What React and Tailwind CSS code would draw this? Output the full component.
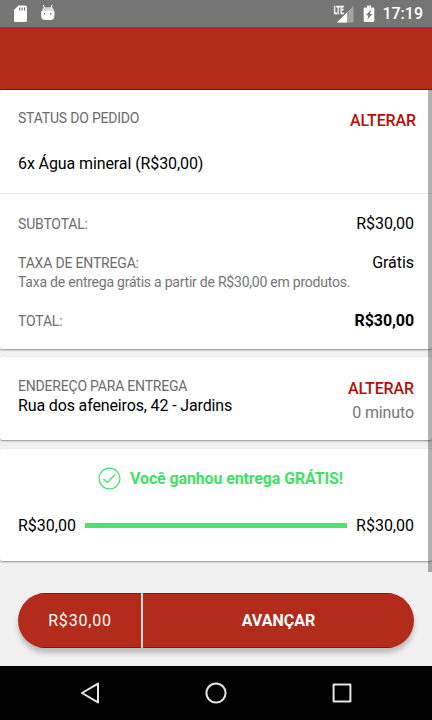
import React from 'react'

const StatusBar = () => (
  <div className="flex h-[27px] shrink-0 items-center justify-between bg-[#757575] pr-[9px] pl-[13px] text-white">
    <div className="flex items-center gap-[13px]">
      <svg width="15" height="18" viewBox="0 0 15 18" fill="none">
        <path d="M5.5 0.5H12.5Q14 0.5 14 2V15.5Q14 17 12.5 17H2.5Q1 17 1 15.5V5Z" fill="#fff" />
        <path d="M6.6 2.6V5.6M9.2 2.6V5.6M11.6 2.6V5.6" stroke="#757575" strokeWidth="1.2" />
      </svg>
      <svg width="14" height="18" viewBox="0 0 14 18" fill="none" className="-mt-[1px]">
        <path d="M2.3 0.8L3.6 4.5M11.2 0.8L9.9 4.5" stroke="#fff" strokeWidth="1" />
        <path d="M1 8Q1 3.2 4 3.2H10Q13 3.2 13 8Z" fill="#d8d8d8" />
        <path d="M0.2 7.2Q7 6 13.4 7.2V12Q13.4 16 9.5 16H4.2Q0.2 16 0.2 12Z" fill="#fff" />
        <circle cx="3.5" cy="9.8" r="0.7" fill="#444" />
        <circle cx="9.8" cy="9.8" r="0.7" fill="#444" />
      </svg>
    </div>
    <div className="flex items-center">
      <svg width="21" height="18" viewBox="0 0 21 18" fill="none">
        <path d="M20.5 1V17.5H4Z" fill="#a3a3a3" />
        <path d="M14 7.5V17.5H4Z" fill="#fff" />
        <path d="M0 0H11.5V8.5H0Z" fill="#757575" />
        <text x="0.7" y="8.6" fill="#fff" stroke="#fff" strokeWidth="0.3" fontSize="10" fontWeight="700" fontFamily="Roboto, sans-serif" textLength="10" lengthAdjust="spacingAndGlyphs">LTE</text>
      </svg>
      <svg width="12" height="18" viewBox="0 0 12 18" fill="none" className="ml-[9px]">
        <path d="M4 0.5H8V2.5H10Q11.3 2.5 11.3 3.5V16Q11.3 17 10 17H2Q0.7 17 0.7 16V3.5Q0.7 2.5 2 2.5H4Z" fill="#fff" />
        <path d="M8.2 4.8L2.8 10.2H5.4L4.4 14.6L9.4 9.1H6.9Z" fill="#757575" />
      </svg>
      <span className="mt-px ml-[7px] text-[16px] leading-5 font-medium">17:19</span>
    </div>
  </div>
)

const Line = ({ label, hint, value, bold }) => (
  <div className="flex justify-between pr-[18px] pl-[18px]">
    <div className="mt-px text-[14px] leading-[19px] text-[#6c6c6c]">
      <p className="tracking-[-0.18px]">{label}</p>
      {hint && (
        <p className="-mr-[80px] tracking-[-0.23px] whitespace-nowrap text-[#757575]">{hint}</p>
      )}
    </div>
    <p
      className={
        bold
          ? 'text-base leading-5 font-bold tracking-[-0.1px]'
          : 'text-base leading-5 tracking-[-0.04px]'
      }
    >
      {value}
    </p>
  </div>
)

const Card = ({ className, children }) => (
  <div className={`shrink-0 rounded-[2px] bg-white shadow-[0_1px_2px_rgba(0,0,0,0.4)] ${className}`}>
    {children}
  </div>
)

const Order = () => (
  <Card className="h-[259px]">
    <div className="flex h-[104px] flex-col border-b border-[#e8e8e8] pt-[18px] pr-[16px] pl-[18px]">
      <div className="flex h-[46px] justify-between">
        <p className="text-[14px] leading-5 tracking-[-0.2px] text-[#6c6c6c]">STATUS DO PEDIDO</p>
        <p className="mt-[3px] text-base leading-5 font-medium tracking-[-0.12px] text-[#b50f0a]">ALTERAR</p>
      </div>
      <p className="text-base leading-5 tracking-[-0.1px]">6x Água mineral (R$30,00)</p>
    </div>
    <div className="flex flex-col gap-[19px] pt-5">
      <Line label="SUBTOTAL:" value="R$30,00" />
      <Line
        label="TAXA DE ENTREGA:"
        hint="Taxa de entrega grátis a partir de R$30,00 em produtos."
        value="Grátis"
      />
      <Line label="TOTAL:" value="R$30,00" bold />
    </div>
  </Card>
)

const Address = () => (
  <Card className="flex h-[83px] justify-between px-[18px] pt-[19px]">
    <div>
      <p className="text-[14px] leading-5 tracking-[-0.2px] text-[#6c6c6c]">ENDEREÇO PARA ENTREGA</p>
      <p className="text-base leading-5 tracking-[-0.14px]">Rua dos afeneiros, 42 - Jardins</p>
    </div>
    <div className="pt-[3px] text-right text-base leading-5 tracking-[-0.12px]">
      <p className="font-medium text-[#b50f0a]">ALTERAR</p>
      <p className="mt-1 text-[#757575]">0 minuto</p>
    </div>
  </Card>
)

const FreeDelivery = () => (
  <Card className="h-[112px] px-[18px] pt-[18px]">
    <div className="flex items-center justify-center gap-[9px] pl-[9px] text-[#43e068]">
      <svg width="23" height="23" viewBox="0 0 23 23" fill="none" stroke="currentColor">
        <circle cx="11.5" cy="11.5" r="10.4" strokeWidth="1.1" />
        <path d="M5.5 12L9.4 15.5L17.2 7.5" strokeWidth="1.2" />
      </svg>
      <p className="text-base leading-5 font-bold tracking-[-0.13px]">Você ganhou entrega GRÁTIS!</p>
    </div>
    <div className="mt-[25px] flex items-center justify-between text-base leading-5">
      <p className="mt-px -mb-px">R$30,00</p>
      <div className="mx-[9px] h-[5px] flex-1 bg-[#4be36e]" />
      <p className="mt-px -mb-px">R$30,00</p>
    </div>
  </Card>
)

const NavBar = () => (
  <div className="flex h-[54px] shrink-0 items-center justify-center gap-[102px] bg-black">
    <svg width="24" height="24" viewBox="0 0 24 24" fill="none" stroke="#e6e6e6" strokeWidth="2" strokeLinejoin="round">
      <path d="M20 2.6V21.4L4 12Z" />
    </svg>
    <svg width="24" height="24" viewBox="0 0 24 24" fill="none" stroke="#e6e6e6" strokeWidth="2">
      <circle cx="12" cy="12" r="9.6" />
    </svg>
    <svg width="24" height="24" viewBox="0 0 24 24" fill="none" stroke="#e6e6e6" strokeWidth="2" strokeLinejoin="round">
      <path d="M3.6 3.6H20.4V20.4H3.6Z" />
    </svg>
  </div>
)

const App = () => {
  return (
    <div className="flex h-[720px] w-[432px] flex-col overflow-hidden bg-[#f1f1f1] font-[Roboto,sans-serif] text-black">
      <StatusBar />
      <div className="h-[63px] shrink-0 border-b border-[#a80000] bg-[#b32b1b]" />
      <div className="relative flex h-[482px] shrink-0 flex-col">
        <Order />
        <div className="h-2 shrink-0" />
        <Address />
        <div className="h-[9px] shrink-0" />
        <FreeDelivery />
        <div className="absolute top-0 right-0 h-full w-[4.5px] bg-black/30" />
      </div>
      <div className="flex flex-1 flex-col px-[18px] pt-[21px]">
        <div className="flex h-[55px] overflow-hidden rounded-full bg-[#b32b1b] text-base text-white shadow-[0_5px_5px_rgba(0,0,0,0.22)]">
          <button className="w-[123px] border-y border-[#b00000] pl-px tracking-[0.8px]">R$30,00</button>
          <div className="w-[2px] bg-[#f6dcda]" />
          <button className="flex-1 border-y border-[#b00000] font-bold">AVANÇAR</button>
        </div>
      </div>
      <NavBar />
    </div>
  )
}

export default App
